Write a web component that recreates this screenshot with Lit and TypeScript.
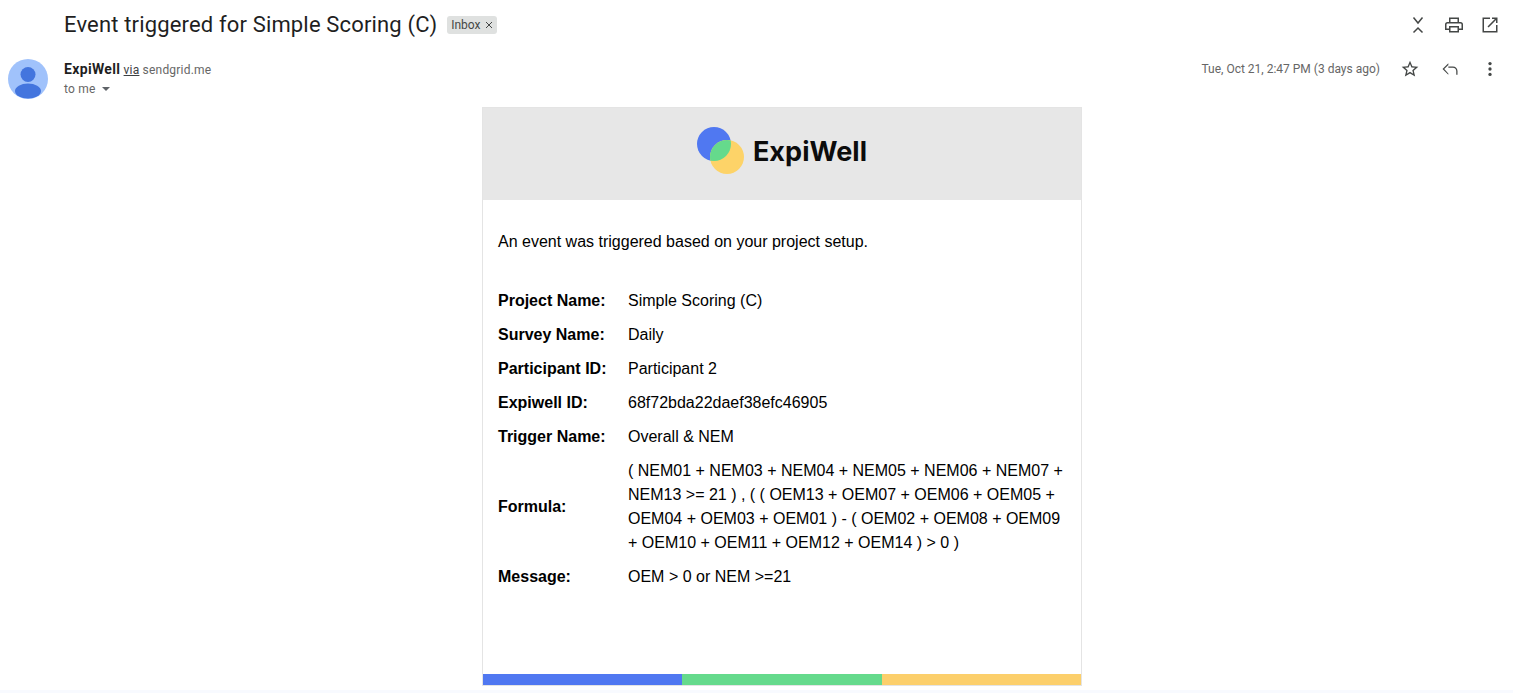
import { LitElement, html, css } from "lit";
import { customElement } from "lit/decorators.js";

const rows: [string, unknown][] = [
  ["Project Name:", "Simple Scoring (C)"],
  ["Survey Name:", "Daily"],
  ["Participant ID:", "Participant 2"],
  ["Expiwell ID:", "68f72bda22daef38efc46905"],
  ["Trigger Name:", "Overall & NEM"],
  ["Formula:", "( NEM01 + NEM03 + NEM04 + NEM05 + NEM06 + NEM07 + NEM13 >= 21 ) , ( ( OEM13 + OEM07 + OEM06 + OEM05 + OEM04 + OEM03 + OEM01 ) - ( OEM02 + OEM08 + OEM09 + OEM10 + OEM11 + OEM12 + OEM14 ) > 0 )"],
  ["Message:", "OEM > 0 or NEM >=21"],
];

@customElement("app-root")
export class AppRoot extends LitElement {
  static styles = css`
    :host { display: block; width: 1513px; height: 693px; overflow: hidden; background: #fff; font-family: Roboto, "Liberation Sans", sans-serif; color: #1f1f1f; }
    .page { height: 690px; display: flex; flex-direction: column; }
    .subject { display: flex; align-items: center; height: 24px; padding: 13px 0 0 64px; }
    .title { font-size: 22px; line-height: 24px; font-weight: 400; white-space: nowrap; letter-spacing: 0.16px; }
    .chip { display: flex; align-items: center; gap: 4px; margin-left: 10px; height: 18px; padding: 0 4px; background: #dfe1e0; border-radius: 3px; font-size: 12px; color: #444746; }
    .chip svg { display: block; }
    .tools { margin-left: auto; display: flex; align-items: center; gap: 16px; padding-right: 13px; }
    .tools svg, .actions svg { display: block; fill: #444746; }
    .tools .fold { fill: none; stroke: #444746; stroke-width: 1.5; }
    .sender { display: flex; height: 40px; padding: 22px 0 0 8px; }
    .avatar { width: 40px; height: 40px; flex: none; display: block; }
    .who { margin-left: 16px; font-size: 12px; color: #666; letter-spacing: 0.2px; }
    .line1 { height: 20px; line-height: 20px; white-space: nowrap; }
    .line1 b { font-size: 14px; font-weight: 700; color: #1f1f1f; letter-spacing: 0.35px; }
    .line1 u { color: #3c4043; }
    .line2 { display: flex; align-items: center; height: 20px; }
    .caret { margin-left: 6px; width: 0; height: 0; border: 4px solid transparent; border-top-color: #5f6368; border-bottom: 0; }
    .meta { margin-left: auto; display: flex; align-items: center; height: 20px; padding-right: 13px; }
    .date { font-size: 12px; color: #666; white-space: nowrap; margin-right: 20px; }
    .actions { display: flex; align-items: center; gap: 20px; }
    .card { box-sizing: border-box; width: 600px; height: 579px; margin: 8px 0 0 482px; border: 1px solid #e4e4e4; display: flex; flex-direction: column; font-family: "Liberation Sans", Arial, sans-serif; color: #000; }
    .band { box-sizing: border-box; height: 92px; flex: none; background: #e7e7e7; padding-bottom: 7px; display: flex; align-items: center; justify-content: center; gap: 9px; }
    .logo-mark { display: block; flex: none; }
    .logo-text { font-family: Inter, sans-serif; font-weight: 700; font-size: 27px; line-height: 30px; letter-spacing: 0.05px; color: #0c0c0c; margin-top: 2px; }
    .body { flex: 1; padding: 30px 15px 0; font-size: 16px; line-height: 24px; }
    .intro { margin: 0 0 30px; }
    .row { display: grid; grid-template-columns: 130px 1fr; align-items: center; padding: 5px 0; }
    .row b { font-weight: 700; }
    .stripes { display: grid; grid-template-columns: 199px 200px 199px; height: 11px; flex: none; }
    .s1 { background: #5078f1; } .s2 { background: #65da8c; } .s3 { background: #fccf6b; }
    .foot { height: 3px; background: #f8faff; }
  `;

  render() {
    return html`<div class="page">
      <div class="subject">
        <span class="title">Event triggered for Simple Scoring (C)</span>
        <span class="chip">Inbox
          <svg width="8" height="8" viewBox="0 0 8 8"><path d="M1 1l6 6M7 1L1 7" stroke="#444746" stroke-width="1" fill="none"/></svg>
        </span>
        <div class="tools">
          <svg class="fold" width="20" height="20" viewBox="0 0 20 20"><path d="M5.500 2.500L10 8l4.500-5.500M5.500 17.500L10 13l4.500 4.500"/></svg>
          <svg width="20" height="20" viewBox="0 0 20 20"><path fill-rule="evenodd" d="M5 2.500h10V7h1.500A2.500 2.500 0 0 1 19 9.500V15h-4v2.500H5V15H1V9.500A2.500 2.500 0 0 1 3.500 7H5zM6.500 4v3h7V4zM3.500 8.500a1 1 0 0 0-1 1v4H5V11h10v2.500h2.500v-4a1 1 0 0 0-1-1zM6.500 12.500V16h7v-3.500z"/></svg>
          <svg width="20" height="20" viewBox="0 0 20 20"><path d="M2.500 2.500H10V4H4v12h12v-6h1.500v7.500h-15zM12 2.500h5.500V8H16V5.100l-7.400 7.400-1.100-1.100L14.900 4H12z"/></svg>
        </div>
      </div>
      <div class="sender">
        <svg class="avatar" viewBox="0 0 40 40">
          <defs><clipPath id="c"><circle cx="20" cy="20" r="20"/></clipPath></defs>
          <circle cx="20" cy="20" r="20" fill="#a0c2fb"/>
          <g clip-path="url(#c)" fill="#4375de">
            <circle cx="20" cy="15.500" r="7.500"/>
            <ellipse cx="20" cy="32" rx="13" ry="7.500"/>
          </g>
        </svg>
        <div class="who">
          <div class="line1"><b>ExpiWell</b> <u>via</u> sendgrid.me</div>
          <div class="line2">to me<span class="caret"></span></div>
        </div>
        <div class="meta">
          <span class="date">Tue, Oct 21, 2:47 PM (3 days ago)</span>
          <div class="actions">
            <svg width="20" height="20" viewBox="0 0 24 24"><path d="M22 9.240l-7.190-.62L12 2 9.190 8.630 2 9.240l5.460 4.730L5.820 21 12 17.270 18.180 21l-1.630-7.030zM12 15.400l-3.760 2.270 1-4.280-3.320-2.880 4.380-.38L12 6.100l1.710 4.040 4.380.38-3.320 2.880 1 4.280z"/></svg>
            <svg width="20" height="20" viewBox="0 0 24 24"><path d="M10 9V5l-7 7 7 7v-1.500L5.100 12 10 7.100V9zm0 0v1.500h5.500c2.500 0 4 1.500 4 4V19H21v-4.500c0-3.500-2.500-5.500-5.500-5.500z" /></svg>
            <svg width="20" height="20" viewBox="0 0 24 24"><circle cx="12" cy="5.500" r="2"/><circle cx="12" cy="12" r="2"/><circle cx="12" cy="18.500" r="2"/></svg>
          </div>
        </div>
      </div>
      <div class="card">
        <div class="band">
          <svg class="logo-mark" width="47" height="47" viewBox="0 0 47 47">
            <defs><clipPath id="lens"><circle cx="17" cy="17" r="17"/></clipPath></defs>
            <circle cx="17" cy="17" r="17" fill="#5078f1"/>
            <circle cx="30" cy="30" r="17" fill="#fdd368"/>
            <circle cx="30" cy="30" r="17" fill="#65da8c" clip-path="url(#lens)"/>
          </svg>
          <span class="logo-text">ExpiWell</span>
        </div>
        <div class="body">
          <p class="intro">An event was triggered based on your project setup.</p>
          ${rows.map(([k, v]) => html`<div class="row"><b>${k}</b><span>${v}</span></div>`)}
        </div>
        <div class="stripes"><div class="s1"></div><div class="s2"></div><div class="s3"></div></div>
      </div>
      <div style="flex:1"></div>
    </div>
    <div class="foot"></div>`;
  }
}
